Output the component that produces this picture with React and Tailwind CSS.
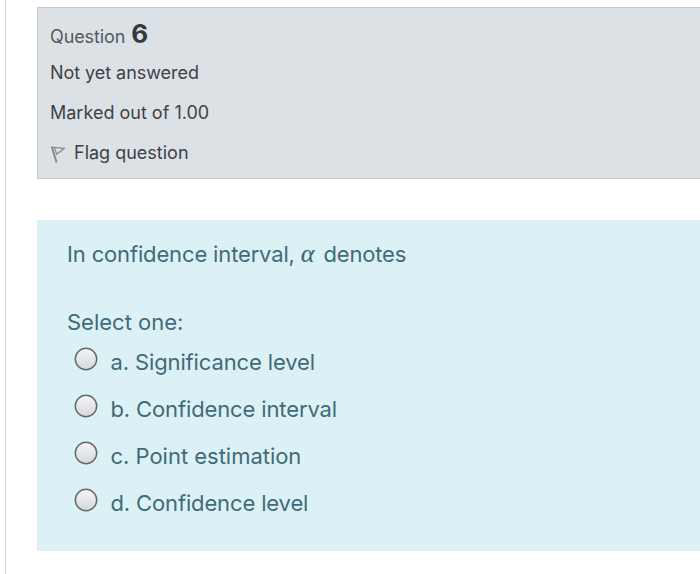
const answers = [
  { key: 'a', text: 'a. Significance level', style: 'tracking-[-0.13px]' },
  { key: 'b', text: 'b. Confidence interval', style: 'tracking-[-0.13px]' },
  { key: 'c', text: 'c. Point estimation', style: 'tracking-[-0.02px]' },
  { key: 'd', text: 'd. Confidence level', style: 'tracking-[-0.14px]' },
];

function FlagIcon() {
  return (
    <svg className="mt-px h-[20px] w-[18px] shrink-0" viewBox="0 0 18 20" fill="none" stroke="#85898d">
      <path d="M1.8 2.6 L6.6 18.4" strokeWidth="1.9" />
      <path d="M3 3.4 L14.6 4.3 L6.2 10.6" strokeWidth="1.3" strokeLinejoin="round" />
      <path d="M4.6 4 L6.6 10" strokeWidth="1.1" />
    </svg>
  );
}

function Radio({ id }) {
  return (
    <svg className="h-[24px] w-[24px] shrink-0" viewBox="0 0 24 24">
      <defs>
        <linearGradient id={id} x1="0" y1="0" x2="0" y2="1">
          <stop offset="0" stopColor="#f6f6f7" />
          <stop offset="1" stopColor="#d6d7db" />
        </linearGradient>
      </defs>
      <circle cx="12" cy="12" r="10.7" fill={`url(#${id})`} stroke="#66696c" strokeWidth="1.5" />
    </svg>
  );
}

export default function App() {
  return (
    <div className="flex h-[574px] w-[700px] overflow-hidden bg-white font-['Inter',sans-serif]">
      <div className="ml-[5px] w-px shrink-0 bg-[#d5d7da]" />
      <main className="ml-[31px] flex flex-1 flex-col pt-[7px]">
        <section className="flex h-[172px] flex-col border border-r-0 border-[#c8cbd3] bg-[#dce1e6] pl-3 text-[18px] whitespace-nowrap text-[#3d4246]">
          <h3 className="flex h-[45px] items-baseline text-[#54595e]">
            <span className="text-[18px] leading-[52px] tracking-[-0.1px]">Question</span>
            <span className="ml-[6px] text-[26px] leading-[52px] font-bold text-[#33383c]">6</span>
          </h3>
          <div className="leading-[40px] tracking-[-0.05px]">Not yet answered</div>
          <div className="leading-[40px]">Marked out of 1.00</div>
          <div className="flex items-center leading-[40px]">
            <FlagIcon />
            <span className="ml-[6px]">Flag question</span>
          </div>
        </section>
        <section className="mt-[41px] h-[331px] bg-[#dcf1f6] pt-[14px] pl-[30px] text-[22px] whitespace-nowrap text-[#406b78]">
          <p className="leading-[40px] tracking-[-0.15px]">
            In confidence interval,{' '}
            <span className="mr-[3px] inline-block origin-left font-['Liberation_Serif',serif] text-[26px] leading-none italic [-webkit-text-stroke:0.2px_#406b78]">
              α
            </span>{' '}
            denotes
          </p>
          <p className="mt-[28px] leading-[40px]">Select one:</p>
          <div className="flex flex-col">
            {answers.map((a) => (
              <label key={a.key} className="flex h-[47px] items-start pl-[7px]">
                <span className="mt-[5px] flex">
                  <Radio id={a.key} />
                </span>
                <span className={'ml-[12.5px] leading-[40px] ' + a.style}>{a.text}</span>
              </label>
            ))}
          </div>
        </section>
      </main>
    </div>
  );
}
